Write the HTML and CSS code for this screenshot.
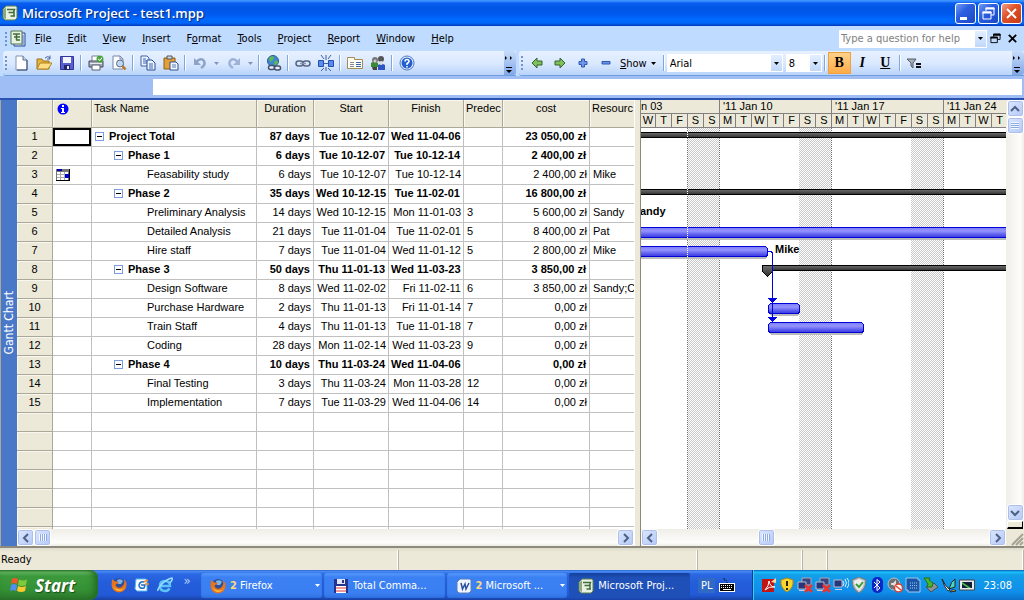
FILE: index.html
```html
<!DOCTYPE html>
<html lang="en">
<head>
    <meta charset="UTF-8">
    <meta name="viewport" content="width=device-width, initial-scale=1.0">
    <title>Microsoft Project - test1.mpp</title>
    <link rel="stylesheet" href="styles.css">
</head>
<body>
    <svg class="sprite" aria-hidden="true">
        <symbol id="project" viewBox="0 0 16 16">
            <path d="M4 1h10l1 1v11l-2 2H3l-2-2V4z" fill="#e9f1e2" stroke="#5d7f52"/>
            <path d="M1 5l3-3v12l-3-1z" fill="#8aa97c"/>
            <path d="M5 4.500h7.500l-1 3H6.500M7 7.500h5v3.500H8.500M9 11h4" fill="none" stroke="#3f6e3a" stroke-width="1.500"/>
        </symbol>
        <symbol id="firefox" viewBox="0 0 16 16">
            <circle cx="8" cy="7" r="6" fill="#2c4f9e"/>
            <path d="M6 3q4-2 6 1l-2 3H7z" fill="#7db4e6"/>
            <path d="M1 2q0 3-.5 5.500Q1 15 8 15.500 15 15 15.500 8 15.500 4 13 2q1 4-1 6.500-2 3-5 2Q4 9 5 7L8 6Q7 4 5 4.500 3 4 1 2z" fill="#e8731a"/>
            <path d="M2 9q2 5 7 5 4-1 5.500-5-2 4-6 3.500Q4 12 2 9z" fill="#f9c23c"/>
        </symbol>
        <symbol id="down" viewBox="0 0 5 3"><path d="M0 0h5L2.500 3z" fill="currentColor"/></symbol>
        <symbol id="left" viewBox="0 0 10 10"><path d="M7 1L3 5l4 4" fill="none" stroke="#4d6185" stroke-width="2"/></symbol>
        <symbol id="right" viewBox="0 0 10 10"><path d="M3 1l4 4-4 4" fill="none" stroke="#4d6185" stroke-width="2"/></symbol>
        <symbol id="more" viewBox="0 0 10 22"><path d="M1 4l2 2-2 2zM6 4l2 2-2 2zM2 15h6v1H2zM2 18h6l-3 3z" fill="#000"/></symbol>
        <symbol id="restore" viewBox="0 0 12 12"><path d="M4 4V1h7v6H8M1 4.500h7v6H1z" fill="none" stroke="currentColor" stroke-width="1"/><path d="M3.500 1h8v2h-8zM.5 4h8v2h-8z" fill="currentColor"/></symbol>
        <symbol id="net" viewBox="0 0 16 16">
            <path d="M5 1h9v7H5z" fill="#3b467f" stroke="#aab"/><path d="M1 5h8v7H1z" fill="#27357a" stroke="#bbc"/>
            <path d="M2 13h7v1H2z" fill="#ccd"/><path d="M8 8l7 7M15 8l-7 7" stroke="#f0312a" stroke-width="2.500"/>
        </symbol>
    </svg>

    <header class="titlebar">
        <svg class="icon"><use href="#project"/></svg>
        <h1>Microsoft Project - test1.mpp</h1>
        <button class="win" aria-label="Minimize"><svg viewBox="0 0 19 19"><path d="M4 13h7v3H4z" fill="#fff"/></svg></button>
        <button class="win" aria-label="Restore"><svg viewBox="0 0 19 19"><path d="M7 7V4h8v7h-3M4 8h8v7H4z" fill="none" stroke="#fff"/><path d="M6.500 3.500h9v2h-9zM3.500 7.500h9v2h-9z" fill="#fff"/></svg></button>
        <button class="win close" aria-label="Close"><svg viewBox="0 0 19 19"><path d="M5 5l9 9M14 5l-9 9" stroke="#fff" stroke-width="2"/></svg></button>
    </header>

    <nav class="menubar">
        <span class="grip"></span>
        <svg class="doc-icon" viewBox="0 0 18 18">
            <path d="M5 3h11v13H5z" fill="#dbe7fb" stroke="#2b4b8e"/>
            <path d="M2 1h11v13H2z" fill="#e9f1e2" stroke="#4f7548"/>
            <path d="M4 4h7M5 7h6M7 10h4M7.500 4v6" stroke="#3f6e3a" stroke-width="1.500"/><path d="M12 15h3M14 5v9" stroke="#5177b8"/>
        </svg>
        <button><u>F</u>ile</button>
        <button><u>E</u>dit</button>
        <button><u>V</u>iew</button>
        <button><u>I</u>nsert</button>
        <button>F<u>o</u>rmat</button>
        <button><u>T</u>ools</button>
        <button><u>P</u>roject</button>
        <button><u>R</u>eport</button>
        <button><u>W</u>indow</button>
        <button><u>H</u>elp</button>
        <div class="combo ask">
            <input type="text" placeholder="Type a question for help" aria-label="Type a question for help">
            <span class="drop"><svg class="caret"><use href="#down"/></svg></span>
        </div>
        <button class="mdi" aria-label="Restore window"><svg><use href="#restore"/></svg></button>
        <button class="mdi" aria-label="Close window"><svg viewBox="0 0 12 12"><path d="M2 2l8 8M10 2l-8 8" stroke="#000" stroke-width="2"/></svg></button>
    </nav>

    <div class="toolbars">
        <div class="toolbar">
            <span class="grip"></span>
            <button class="tool" aria-label="New"><svg viewBox="0 0 16 16"><path d="M3 1h7l4 4v10H3z" fill="#fff" stroke="#8294b5"/><path d="M10 1v4h4" fill="#c9d8f2" stroke="#5a6c94"/><path d="M14 5v10H4" fill="none" stroke="#34456e"/></svg></button>
            <button class="tool" aria-label="Open"><svg viewBox="0 0 16 16"><path d="M1 4h5l1 2h6v8H1z" fill="#e6b43e" stroke="#9a7018"/><path d="M1 14l3-6h12l-4 6z" fill="#ffdf83" stroke="#b0811f"/><path d="M9 3q3-3 5 0M14 .5V4h-3" fill="none" stroke="#40629c"/></svg></button>
            <button class="tool" aria-label="Save"><svg viewBox="0 0 16 16"><path d="M1.500 1.500h13v13h-13z" fill="#5a5fd0" stroke="#30349a"/><path d="M4 2h8v6H4z" fill="#f2f4ff"/><path d="M5 10h6v5H5z" fill="#23266b"/><path d="M8 11h2v3H8z" fill="#e8eaff"/></svg></button>
            <span class="sep"></span>
            <button class="tool" aria-label="Print"><svg viewBox="0 0 16 16"><path d="M4 1h7v6H4z" fill="#fff" stroke="#76809a"/><path d="M1 6h14v6H1z" fill="#a5abb8" stroke="#454b59"/><path d="M2 8h12v1H2z" fill="#e9ecf2"/><path d="M4 10h8v5H4z" fill="#fff" stroke="#596175"/><circle cx="12" cy="4" r="3.500" fill="#4aa43c"/><path d="M10 4l2 1.500 2-3" fill="none" stroke="#fff"/></svg></button>
            <button class="tool" aria-label="Print Preview"><svg viewBox="0 0 16 16"><path d="M2 1h7l3 3v10H2z" fill="#fff" stroke="#7586a8"/><path d="M9 1v3h3" fill="none" stroke="#7586a8"/><circle cx="9" cy="8.500" r="3.500" fill="#bcd9f4" stroke="#5a6b86"/><path d="M11.500 11l3 3.500" stroke="#bd7427" stroke-width="2.500"/></svg></button>
            <span class="sep"></span>
            <button class="tool" aria-label="Copy"><svg viewBox="0 0 16 16"><path d="M1 1h6l2 2v8H1z" fill="#eef4ff" stroke="#3d64a8"/><path d="M3 4h3M3 6h4M3 8h4" stroke="#3d64a8"/><path d="M7 5h5l3 3v7H7z" fill="#eef4ff" stroke="#274c96"/><path d="M9 9h4M9 11h4M9 13h4" stroke="#3d64a8"/></svg></button>
            <button class="tool" aria-label="Paste"><svg viewBox="0 0 16 16"><path d="M1 3h11v11H1z" fill="#e3a03a" stroke="#8f5d13"/><path d="M4 1h5v3H4z" fill="#d5d9e2" stroke="#555"/><path d="M7 7h6l2 2v6H7z" fill="#f2f6ff" stroke="#31508d"/><path d="M9 10h4M9 12h4" stroke="#5a77b0"/></svg></button>
            <span class="sep"></span>
            <button class="tool" aria-label="Undo"><svg viewBox="0 0 16 16"><path d="M4 7q5-5 8-1 2 4-3 7" fill="none" stroke="#8fa3c9" stroke-width="2.500"/><path d="M2 3v7h7z" fill="#8fa3c9"/></svg></button>
            <button class="tool-arrow dim" aria-label="Undo list"><svg class="caret"><use href="#down"/></svg></button>
            <button class="tool" aria-label="Redo"><svg viewBox="0 0 16 16"><path d="M12 7Q7 2 4 6q-2 4 3 7" fill="none" stroke="#9fb2d6" stroke-width="2.500"/><path d="M14 3v7H7z" fill="#9fb2d6"/></svg></button>
            <button class="tool-arrow dim" aria-label="Redo list"><svg class="caret"><use href="#down"/></svg></button>
            <span class="sep"></span>
            <button class="tool" aria-label="Insert Hyperlink"><svg viewBox="0 0 16 16"><circle cx="7" cy="6" r="5.500" fill="#3f87d1" stroke="#2a5c96"/><path d="M3 3q3-3 5-1l-1 3-3 2zM8 7l3-2 1 3-3 3z" fill="#5cbb4a"/><rect x="2.500" y="10.500" width="6" height="4" rx="2" fill="#e6efff" stroke="#44506b" stroke-width="1.500"/><rect x="8.500" y="11" width="6" height="4" rx="2" fill="#e6efff" stroke="#44506b" stroke-width="1.500"/></svg></button>
            <span class="sep"></span>
            <button class="tool" aria-label="Link Tasks"><svg viewBox="0 0 16 16"><rect x="1" y="6" width="7" height="5" rx="2.500" fill="none" stroke="#566583" stroke-width="1.500"/><rect x="8" y="6" width="7" height="5" rx="2.500" fill="none" stroke="#566583" stroke-width="1.500"/><path d="M5 8.500h6" stroke="#8996ae" stroke-width="1.500"/></svg></button>
            <button class="tool" aria-label="Unlink Tasks"><svg viewBox="0 0 16 16"><path d="M.5 5.500h5v6h-5zM10.500 5.500h5v6h-5z" fill="#5b8cec" stroke="#2350b0"/><path d="M8 0v5M8 12v4M3 0l3 4M13 0l-3 4M3 16l3-3M13 16l-3-3M6 8.500h4" stroke="#3a5f9d"/></svg></button>
            <span class="sep"></span>
            <button class="tool" aria-label="Task Information"><svg viewBox="0 0 16 16"><path d="M.5 4.500V2.500h7v2h8v9H.5z" fill="#fffdf2" stroke="#a38b52"/><path d="M3 7.500h4M3 9.500h4M3 11.500h4" stroke="#808a9c"/><path d="M9 7.500h5M9 9.500h5M9 11.500h5" stroke="#3e66ae"/></svg></button>
            <button class="tool" aria-label="Assign Resources"><svg viewBox="0 0 16 16"><path d="M1 8q3-3 7 0v4H1z" fill="#3c8b33"/><path d="M8 10q3-3 7 0v5H8z" fill="#2f55c4"/><circle cx="5" cy="5" r="3" fill="#777"/><circle cx="11" cy="4" r="3" fill="#555"/><circle cx="11" cy="8" r="2" fill="#ddd"/><circle cx="5" cy="6" r="1.500" fill="#ccc"/><path d="M2 12h5v3H3z" fill="#444"/></svg></button>
            <span class="sep"></span>
            <button class="tool" aria-label="Help"><svg viewBox="0 0 16 16"><circle cx="8" cy="8" r="7" fill="#eaf2ff" stroke="#4a78c4"/><circle cx="8" cy="8" r="5.500" fill="#2260cf"/><path d="M6 6.500Q6 4.500 8 4.500t2 2Q10 7.500 8 8.500V10M8 11v1.500" fill="none" stroke="#fff" stroke-width="1.500"/></svg></button>
            <button class="overflow" aria-label="Toolbar options"><svg><use href="#more"/></svg></button>
        </div>
        <div class="toolbar">
            <span class="grip"></span>
            <button class="tool" aria-label="Outdent"><svg viewBox="0 0 16 16"><path d="M3 8l5-5v3h5v4H8v3z" fill="#7fc05a" stroke="#35622a"/></svg></button>
            <button class="tool" aria-label="Indent"><svg viewBox="0 0 16 16"><path d="M13 8L8 3v3H3v4h5v3z" fill="#7fc05a" stroke="#35622a"/></svg></button>
            <button class="tool" aria-label="Show Subtasks"><svg viewBox="0 0 16 16"><path d="M6.500 4h3v2.500H12v3H9.500V12h-3V9.500H4v-3h2.500z" fill="#6e96e6" stroke="#2f56b5"/></svg></button>
            <button class="tool" aria-label="Hide Subtasks"><svg viewBox="0 0 16 16"><path d="M4 6.500h8v2.500H4z" fill="#6e96e6" stroke="#2f56b5"/></svg></button>
            <button class="show"><span><u>S</u>how</span><svg class="caret"><use href="#down"/></svg></button>
            <span class="sep"></span>
            <div class="combo font">
                <select aria-label="Font"><option>Arial</option></select>
                <span class="drop"><svg class="caret"><use href="#down"/></svg></span>
            </div>
            <div class="combo size">
                <select aria-label="Font size"><option>8</option></select>
                <span class="drop"><svg class="caret"><use href="#down"/></svg></span>
            </div>
            <span class="sep"></span>
            <button class="tool letter pressed"><b>B</b></button>
            <button class="tool letter"><i>I</i></button>
            <button class="tool letter"><u>U</u></button>
            <span class="sep"></span>
            <button class="tool" aria-label="AutoFilter"><svg viewBox="0 0 16 16"><path d="M1 4h9L7 8v5l-2-2V8z" fill="#a9aeb8" stroke="#555b66"/><path d="M10 8h5v2h-5zM10 11h5v2h-5z" fill="#111"/></svg></button>
            <button class="overflow" aria-label="Toolbar options"><svg><use href="#more"/></svg></button>
        </div>
    </div>

    <div class="entry"><input type="text" aria-label="Entry bar"></div>

    <main class="workspace">
        <div class="view-name"><span>Gantt Chart</span></div>

        <section class="pane">
            <div class="sheet">
                <table>
                    <colgroup>
                        <col class="c-num"><col class="c-ind"><col class="c-name"><col class="c-dur"><col class="c-date"><col class="c-date"><col class="c-pred"><col class="c-cost"><col class="c-res">
                    </colgroup>
                    <thead>
                        <tr>
                            <th></th>
                            <th class="left"><svg class="info" viewBox="0 0 12 12"><circle cx="6" cy="6" r="5.500" fill="#00f"/><path d="M5 2h2v2H5zM4 5h3v4h1v1H4V9h1V6H4z" fill="#fff"/></svg></th>
                            <th class="left">Task Name</th><th>Duration</th><th>Start</th><th>Finish</th><th class="left">Predec</th><th>cost</th><th class="left">Resourc</th>
                        </tr>
                    </thead>
                    <tbody>
                        <tr class="summary"><th>1</th><td class="selected"></td><td class="name"><button class="toggle" aria-label="Collapse"></button>Project Total</td><td>87 days</td><td>Tue 10-12-07</td><td>Wed 11-04-06</td><td></td><td>23 050,00 zł</td><td></td></tr>
                        <tr class="summary"><th>2</th><td></td><td class="name phase"><button class="toggle" aria-label="Collapse"></button>Phase 1</td><td>6 days</td><td>Tue 10-12-07</td><td>Tue 10-12-14</td><td></td><td>2 400,00 zł</td><td></td></tr>
                        <tr><th>3</th><td class="ind"><svg class="calendar" viewBox="0 0 14 12"><path d="M0 0h14v12H0z" fill="#777"/><path d="M1 3h11v8H1z" fill="#fff"/><path d="M1 0h5v2H1z" fill="#00a"/><path d="M1 5.500h11M1 8.500h11M4.500 3v8M8.500 3v8" stroke="#aaa"/><path d="M9 5h4v4H9z" fill="#00d"/><path d="M13 0v11H0v1h14V0z" fill="#000"/></svg></td><td class="name task">Feasability study</td><td>6 days</td><td>Tue 10-12-07</td><td>Tue 10-12-14</td><td></td><td>2 400,00 zł</td><td>Mike</td></tr>
                        <tr class="summary"><th>4</th><td></td><td class="name phase"><button class="toggle" aria-label="Collapse"></button>Phase 2</td><td>35 days</td><td>Wed 10-12-15</td><td>Tue 11-02-01</td><td></td><td>16 800,00 zł</td><td></td></tr>
                        <tr><th>5</th><td></td><td class="name task">Preliminary Analysis</td><td>14 days</td><td>Wed 10-12-15</td><td>Mon 11-01-03</td><td>3</td><td>5 600,00 zł</td><td>Sandy</td></tr>
                        <tr><th>6</th><td></td><td class="name task">Detailed Analysis</td><td>21 days</td><td>Tue 11-01-04</td><td>Tue 11-02-01</td><td>5</td><td>8 400,00 zł</td><td>Pat</td></tr>
                        <tr><th>7</th><td></td><td class="name task">Hire staff</td><td>7 days</td><td>Tue 11-01-04</td><td>Wed 11-01-12</td><td>5</td><td>2 800,00 zł</td><td>Mike</td></tr>
                        <tr class="summary"><th>8</th><td></td><td class="name phase"><button class="toggle" aria-label="Collapse"></button>Phase 3</td><td>50 days</td><td>Thu 11-01-13</td><td>Wed 11-03-23</td><td></td><td>3 850,00 zł</td><td></td></tr>
                        <tr><th>9</th><td></td><td class="name task">Design Software</td><td>8 days</td><td>Wed 11-02-02</td><td>Fri 11-02-11</td><td>6</td><td>3 850,00 zł</td><td>Sandy;C</td></tr>
                        <tr><th>10</th><td></td><td class="name task">Purchase Hardware</td><td>2 days</td><td>Thu 11-01-13</td><td>Fri 11-01-14</td><td>7</td><td>0,00 zł</td><td></td></tr>
                        <tr><th>11</th><td></td><td class="name task">Train Staff</td><td>4 days</td><td>Thu 11-01-13</td><td>Tue 11-01-18</td><td>7</td><td>0,00 zł</td><td></td></tr>
                        <tr><th>12</th><td></td><td class="name task">Coding</td><td>28 days</td><td>Mon 11-02-14</td><td>Wed 11-03-23</td><td>9</td><td>0,00 zł</td><td></td></tr>
                        <tr class="summary"><th>13</th><td></td><td class="name phase"><button class="toggle" aria-label="Collapse"></button>Phase 4</td><td>10 days</td><td>Thu 11-03-24</td><td>Wed 11-04-06</td><td></td><td>0,00 zł</td><td></td></tr>
                        <tr><th>14</th><td></td><td class="name task">Final Testing</td><td>3 days</td><td>Thu 11-03-24</td><td>Mon 11-03-28</td><td>12</td><td>0,00 zł</td><td></td></tr>
                        <tr><th>15</th><td></td><td class="name task">Implementation</td><td>7 days</td><td>Tue 11-03-29</td><td>Wed 11-04-06</td><td>14</td><td>0,00 zł</td><td></td></tr>
                        <tr><th></th><td></td><td></td><td></td><td></td><td></td><td></td><td></td><td></td></tr>
                        <tr><th></th><td></td><td></td><td></td><td></td><td></td><td></td><td></td><td></td></tr>
                        <tr><th></th><td></td><td></td><td></td><td></td><td></td><td></td><td></td><td></td></tr>
                        <tr><th></th><td></td><td></td><td></td><td></td><td></td><td></td><td></td><td></td></tr>
                        <tr><th></th><td></td><td></td><td></td><td></td><td></td><td></td><td></td><td></td></tr>
                        <tr><th></th><td></td><td></td><td></td><td></td><td></td><td></td><td></td><td></td></tr>
                        <tr><th></th><td></td><td></td><td></td><td></td><td></td><td></td><td></td><td></td></tr>
                    </tbody>
                </table>
            </div>
            <div class="hscroll">
                <button class="sb" aria-label="Scroll left"><svg><use href="#left"/></svg></button>
                <span class="thumb"></span>
                <span class="track"></span>
                <button class="sb" aria-label="Scroll right"><svg><use href="#right"/></svg></button>
            </div>
        </section>

        <div class="splitter"></div>

        <section class="pane">
            <div class="timescale">
                <div class="week partial"><span>n 03</span><ol><li>W</li><li>T</li><li>F</li><li>S</li><li>S</li></ol></div>
                <div class="week"><span>'11 Jan 10</span><ol><li>M</li><li>T</li><li>W</li><li>T</li><li>F</li><li>S</li><li>S</li></ol></div>
                <div class="week"><span>'11 Jan 17</span><ol><li>M</li><li>T</li><li>W</li><li>T</li><li>F</li><li>S</li><li>S</li></ol></div>
                <div class="week"><span>'11 Jan 24</span><ol><li>M</li><li>T</li><li>W</li><li>T</li></ol></div>
            </div>
            <svg class="chart" shape-rendering="crispEdges">
                <defs>
                    <pattern id="weekend" width="2" height="2" patternUnits="userSpaceOnUse"><path d="M0 0h1v1H0zM1 1h1v1H1z" fill="#c8c8c8"/></pattern>
                    <linearGradient id="blue" x1="0" y1="0" x2="0" y2="1"><stop offset="0" stop-color="#7c7cf8"/><stop offset=".35" stop-color="#9494ff"/><stop offset=".8" stop-color="#5050ea"/><stop offset="1" stop-color="#3a3ae0"/></linearGradient>
                    <linearGradient id="black" x1="0" y1="0" x2="0" y2="1"><stop offset="0" stop-color="#707070"/><stop offset="1" stop-color="#303030"/></linearGradient>
                </defs>
                <!-- weekends -->
                <rect x="46" width="32" height="100%" fill="url(#weekend)"/>
                <rect x="158" width="32" height="100%" fill="url(#weekend)"/>
                <rect x="270" width="32" height="100%" fill="url(#weekend)"/>
                <g class="weekline"><line x1="78.500" x2="78.500" y2="100%"/><line x1="190.500" x2="190.500" y2="100%"/><line x1="302.500" x2="302.500" y2="100%"/><line x1="46.500" x2="46.500" y2="100%"/></g>
                <!-- summary bars -->
                <g fill="url(#black)" stroke="#000">
                    <rect x="-5" y="4.500" width="1400" height="5"/>
                    <rect x="-5" y="61.500" width="1400" height="5"/>
                    <rect x="126.500" y="137.500" width="1400" height="5"/>
                    <path d="M121.500 137.500h10v6l-5 5-5-5z"/>
                </g>
                <!-- task bars -->
                <g fill="#bbb"><rect x="-9" y="102" width="1400" height="10"/><rect x="-9" y="121" width="135" height="10" rx="3"/><rect x="129" y="178" width="29" height="10" rx="3"/><rect x="129" y="197" width="93" height="10" rx="3"/></g>
                <g fill="url(#blue)" stroke="#0000d8">
                    <rect x="-9" y="99.500" width="1400" height="10"/>
                    <rect x="-9.500" y="118.500" width="136" height="10" rx="3"/>
                    <rect x="127.500" y="175.500" width="31" height="10" rx="3"/>
                    <rect x="127.500" y="194.500" width="95" height="10" rx="3"/>
                </g>
                <path d="M46.500 4v6M46.500 61v6M46.500 99v11M46.500 118v11" stroke="#fff" stroke-dasharray="1 1"/>
                <!-- links -->
                <path d="M127 123.500h3l1.500 1.500v70" fill="none" stroke="#0000e0"/>
                <path d="M127 170h9l-4.500 5zM127 189h9l-4.500 5z" fill="#0000e0"/>
                <text x="-1" y="87">andy</text>
                <text x="134" y="125">Mike</text>
            </svg>
            <div class="hscroll">
                <button class="sb" aria-label="Scroll left"><svg><use href="#left"/></svg></button>
                <span class="track"></span>
                <span class="thumb"></span>
                <span class="track long"></span>
                <button class="sb" aria-label="Scroll right"><svg><use href="#right"/></svg></button>
            </div>
        </section>

        <div class="vscroll">
            <button class="sb" aria-label="Scroll up"><svg viewBox="0 0 10 10"><path d="M1 7l4-4 4 4" fill="none" stroke="#4d6185" stroke-width="2"/></svg></button>
            <span class="thumb"></span>
            <span class="track"></span>
            <button class="sb" aria-label="Scroll down"><svg viewBox="0 0 10 10"><path d="M1 3l4 4 4-4" fill="none" stroke="#4d6185" stroke-width="2"/></svg></button>
            <span class="split-box"></span>
            <svg class="resize" viewBox="0 0 18 17"><path d="M6 16L17 5M10 16l7-7M14 16l3-3" stroke="#a5a294" stroke-width="2"/></svg>
        </div>
    </main>

    <footer class="status"><span>Ready</span><span></span><span></span><span></span><span></span></footer>

    <div class="taskbar">
        <button class="start">
            <svg viewBox="0 0 18 18"><path d="M2 3q3-2 6 0L7 8Q4 6 1 8z" fill="#f0582a"/><path d="M9 3.500q4 2 8 0L16 9q-4 2-8 0z" fill="#7fc93c"/><path d="M1 9q3-2 6 0l-1 6q-3-2-6 0z" fill="#4f8ff5"/><path d="M8 10q4 2 8 0l-1 5q-4 2-8 0z" fill="#fbc92f"/></svg>
            Start
        </button>
        <div class="quick">
            <button aria-label="Firefox"><svg class="icon"><use href="#firefox"/></svg></button>
            <button aria-label="Mail"><svg class="icon" viewBox="0 0 16 16"><path d="M2 2h10l1 2v10H3L1 12z" fill="#fff" stroke="#58b4ee"/><path d="M10 5Q6 4 5 8q0 4 5 3l1-3H7" fill="none" stroke="#1b6ec9" stroke-width="1.500"/><path d="M10 5l4-2M11 7h4" stroke="#f28b25" stroke-width="1.500"/></svg></button>
            <button aria-label="Internet Explorer"><svg class="icon" viewBox="0 0 16 16"><path d="M3 9h10q0-5-5-5t-5 5 5 5q3 0 4.500-2.500" fill="none" stroke="#5cc4f7" stroke-width="2.500"/><path d="M1 14Q0 12 5 7t10-6q1 2-2 5" fill="none" stroke="#9be0ff" stroke-width="1.500"/></svg></button>
            <span>»</span>
        </div>
        <div class="tasks">
            <button class="task-button"><svg class="icon"><use href="#firefox"/></svg><span class="label"><b>2</b> Firefox</span><svg class="caret"><use href="#down"/></svg></button>
            <button class="task-button"><svg class="icon" viewBox="0 0 16 16"><path d="M1 1h14v14H1z" fill="#22348f"/><path d="M4 1h8v5H4z" fill="#dfe5f4"/><path d="M9 2h2v3H9z" fill="#22348f"/><path d="M3 8h10v7H3z" fill="#fff"/><path d="M3 10h10M3 13h10" stroke="#e03030"/></svg><span class="label">Total Comma...</span></button>
            <button class="task-button"><svg class="icon" viewBox="0 0 16 16"><path d="M4 1h10l1 1v11l-2 2H3l-2-2V4z" fill="#eef4ff" stroke="#5b7fb8"/><path d="M5 5l1.500 6L9 6l1 5 3-6" fill="none" stroke="#2a4f9f" stroke-width="1.500"/></svg><span class="label"><b>2</b> Microsoft ...</span><svg class="caret"><use href="#down"/></svg></button>
            <button class="task-button active"><svg class="icon"><use href="#project"/></svg><span class="label">Microsoft Proj...</span></button>
        </div>
        <div class="lang"><span>PL</span><svg class="icon" viewBox="0 0 16 16"><path d="M0 6h16v9H0z" fill="#fff"/><path d="M1 7h14v7H1z" fill="#000"/><path d="M2 8.500h12M2 10.500h12" stroke="#fff" stroke-dasharray="1 1"/><path d="M4 12.500h8" stroke="#fff"/><path d="M8 6V4q-1-1-3-1V1" fill="none" stroke="#000" stroke-dasharray="1 1"/></svg></div>
        <div class="tray">
            <svg class="icon" viewBox="0 0 16 16"><path d="M1 2h12v13H1z" fill="#c4140f"/><path d="M4 13q4-4 4-9 1 6 6 6-6-1-10 3z" fill="none" stroke="#fff"/><path d="M10 5l5-4v5z" fill="#f6d9a3"/></svg>
            <svg class="icon" viewBox="0 0 16 16"><path d="M8 1l6 2q1 8-6 12Q1 11 2 3z" fill="#fbd32e" stroke="#a6891c"/><path d="M7 4h2v5H7zM7 11h2v2H7z" fill="#222"/></svg>
            <svg class="icon"><use href="#net"/></svg>
            <svg class="icon"><use href="#net"/></svg>
            <svg class="icon" viewBox="0 0 16 16"><path d="M1 3h8v7H1z" fill="#27357a" stroke="#bbc"/><path d="M2 12h7v1H2z" fill="#ccd"/><path d="M10 4q2 2 0 5M12 2q3 4 0 8M14 1q4 5 0 10" fill="none" stroke="#e2ecff"/></svg>
            <svg class="icon" viewBox="0 0 16 16"><path d="M8 0l7 3q0 9-7 13Q1 12 1 3z" fill="#b6bcc0" stroke="#70787c"/><path d="M8 2l5 2q0 6-5 10-5-4-5-10z" fill="#eee"/><path d="M5 7l3 3 4-5" fill="none" stroke="#3c9c36" stroke-width="2"/></svg>
            <svg class="icon" viewBox="0 0 16 16"><rect x="3" y="0" width="11" height="16" rx="5" fill="#0a28c8"/><path d="M5 5l6 6-3 2.500v-11L11 5l-6 6" fill="none" stroke="#fff"/></svg>
            <svg class="icon" viewBox="0 0 16 16"><circle cx="7" cy="7" r="6" fill="#6d7278" stroke="#b9bec4"/><path d="M4 6h2l3-3v8L6 8H4z" fill="#ddd"/><circle cx="11.500" cy="11" r="4" fill="#fff" stroke="#e03e2a" stroke-width="1.500"/><path d="M9 9l5 4" stroke="#e03e2a" stroke-width="1.500"/></svg>
            <svg class="icon" viewBox="0 0 16 16"><path d="M1 1h12v2h2v12H3v-2H1z" fill="#1a57a8" stroke="#9cc8ef"/><path d="M5 6h7M5 8.500h7M5 11h7" stroke="#9cc8ef" stroke-dasharray="1 1"/></svg>
            <svg class="icon" viewBox="0 0 16 16"><path d="M3 10l8-4 4 4-7 5z" fill="#8c9298" stroke="#4a4f54"/><path d="M1 1h6l-1 2 4 3-1 4H4l1-3z" fill="#46b633" stroke="#237018"/></svg>
            <svg class="icon" viewBox="0 0 16 16"><path d="M1 2q2 8 6 12l2-1Q4 9 1 2z" fill="#fff" stroke="#222"/><path d="M8 12q2-8 6-10v8z" fill="#45d4c5" stroke="#222"/><path d="M9 15q3-4 6-1z" fill="#f2df54" stroke="#222"/></svg>
            <svg class="icon" viewBox="0 0 16 16"><path d="M.5 3h15v10H.5z" fill="#e6ebf0" stroke="#444"/><path d="M3 5h10v6H3z" fill="#101c38"/><path d="M3 5l9 6H9L3 7z" fill="#49c04a"/></svg>
            <time>23:08</time>
        </div>
    </div>
</body>
</html>
```

FILE: styles.css
```css
* {
    box-sizing: border-box;
}
body {
    margin: 0;
    height: 100vh;
    display: flex;
    flex-direction: column;
    overflow: hidden;
    font-family: "DejaVu Sans Condensed", "Noto Sans", sans-serif;
    font-size: 11px;
    color: #000;
    background-color: #ece9d8;
}
button, input, select {
    font: inherit;
    color: inherit;
    margin: 0;
    padding: 0;
    border: none;
    border-radius: 0;
    background: none;
}
svg {
    display: block;
    flex: none;
}
.sprite {
    display: none;
}
.icon {
    width: 16px;
    height: 16px;
}
.caret {
    width: 5px;
    height: 3px;
}

/* title bar */
.titlebar {
    flex: none;
    display: flex;
    align-items: center;
    gap: 2px;
    height: 26px;
    padding: 0 2px;
    background: linear-gradient(#3b92ff 0, #3b92ff 1px, #0a5ff0 3px, #0055e5 8px, #0058ee 14px, #0069ff 19px, #0066fc 23px, #0038b8 26px);
}
.titlebar h1 {
    flex: 1;
    margin: 0 0 0 2px;
    font-family: "Open Sans", "Noto Sans", sans-serif;
    font-size: 13px;
    font-weight: 600;
    color: #fff;
    text-shadow: 1px 1px 1px #062a7d;
}
.win {
    width: 21px;
    height: 21px;
    border: 1px solid #fff;
    border-radius: 3px;
    background: linear-gradient(135deg, #6f9bf5, #2c5fe0 40%, #1a49c4);
}
.win.close {
    background: linear-gradient(135deg, #f0a088, #e0542c 40%, #c43a12);
}

/* menu bar */
.menubar {
    flex: none;
    display: flex;
    align-items: center;
    height: 25px;
    padding: 0 3px;
    background-color: #bfdbff;
}
.menubar button {
    padding: 0 8px;
}
.grip {
    flex: none;
    width: 2px;
    height: 14px;
    margin: 0 2px;
    background: repeating-linear-gradient(#6f95cf 0, #6f95cf 2px, transparent 2px, transparent 4px);
}
.doc-icon {
    width: 18px;
    height: 18px;
}
.combo {
    display: flex;
    align-items: center;
    position: relative;
    height: 18px;
    background-color: #fff;
}
.combo select {
    flex: 1;
    min-width: 0;
    height: 18px;
    padding-left: 3px;
    appearance: none;
}
.combo input {
    flex: 1;
    min-width: 0;
    padding-left: 2px;
}
.combo input::placeholder {
    color: #808080;
}
.drop {
    position: absolute;
    right: 1px;
    top: 1px;
    bottom: 1px;
    width: 11px;
    display: flex;
    align-items: center;
    justify-content: center;
    background: linear-gradient(#e3efff, #c0d8fa);
    pointer-events: none;
}
.ask {
    width: 148px;
    margin-left: auto;
}
.menubar .mdi {
    width: 17px;
    padding: 0 3px;
}
.mdi svg {
    width: 11px;
    height: 11px;
}

/* toolbars */
.toolbars {
    flex: none;
    display: grid;
    grid-template-columns: 513fr 505fr;
    gap: 3px;
    height: 25px;
    padding-left: 3px;
    background-color: #bfdbff;
}
.toolbar {
    display: flex;
    align-items: center;
    min-width: 0;
    border-bottom: 1px solid #6f9ddd;
    border-radius: 3px 0 0 3px;
    background: linear-gradient(#e6f0ff, #dbe9ff 50%, #b9d4fa);
}
.tool {
    flex: none;
    width: 23px;
    height: 22px;
    display: flex;
    align-items: center;
    justify-content: center;
}
.tool svg {
    width: 16px;
    height: 16px;
}
.tool-arrow {
    flex: none;
    width: 11px;
    display: flex;
    justify-content: center;
}
.dim {
    color: #8095bb;
}
.sep {
    flex: none;
    width: 2px;
    height: 16px;
    margin: 0 2px;
    border-left: 1px solid #7fa8de;
    border-right: 1px solid #fff;
}
.overflow {
    flex: none;
    align-self: stretch;
    width: 12px;
    margin-left: auto;
    background: linear-gradient(#c8dcfa, #80a8e8);
    border-radius: 0 3px 3px 0;
}
.overflow svg {
    width: 10px;
    height: 22px;
}
.show {
    flex: none;
    display: flex;
    align-items: center;
    gap: 4px;
    padding: 0 5px 0 3px;
}
.font {
    width: 116px;
}
.size {
    width: 36px;
    margin-left: 3px;
}
.letter {
    font-family: "Liberation Serif", serif;
    font-size: 14px;
    font-weight: bold;
}
.pressed {
    background: linear-gradient(#ffd28a, #ffab48);
    border: 1px solid #f0a040;
}

/* entry bar */
.entry {
    flex: none;
    height: 22px;
    padding: 3px 2px 3px 153px;
    background-color: #9ebef5;
}
.entry input {
    display: block;
    width: 100%;
    height: 16px;
    background-color: #fff;
}

/* workspace */
.workspace {
    flex: 1;
    min-height: 0;
    display: grid;
    grid-template-columns: 17px minmax(0, 617fr) 7px minmax(0, 365fr) 18px;
    border-top: 2px solid #2a52b0;
    border-bottom: 2px solid #8e8b7e;
}
.view-name {
    display: flex;
    align-items: center;
    justify-content: center;
    border-left: 1px solid #aca899;
    background-color: #4a78c8;
    color: #fff;
    font-size: 12px;
}
.view-name span {
    writing-mode: vertical-rl;
    transform: rotate(180deg);
}
.pane {
    display: flex;
    flex-direction: column;
    min-height: 0;
    background-color: #fff;
}
.splitter {
    background-color: #ece9d8;
    border-left: 1px solid #fff;
    border-right: 1px solid #8c8a7c;
}
.sheet {
    flex: 1;
    min-height: 0;
    overflow: hidden;
}
table {
    width: 617px;
    table-layout: fixed;
    border-collapse: separate;
    border-spacing: 0;
    font-family: "Liberation Sans", Arial, sans-serif;
}
.c-num { width: 36px; }
.c-ind { width: 39px; }
.c-name { width: 165px; }
.c-dur { width: 57px; }
.c-date { width: 75px; }
.c-pred { width: 39px; }
.c-cost { width: 87px; }
.c-res { width: 44px; }
th, td {
    height: 19px;
    padding: 0 2px 2px;
    line-height: 16px;
    vertical-align: top;
    text-align: right;
    white-space: nowrap;
    overflow: hidden;
    border-right: 1px solid #c0c0c0;
    border-bottom: 1px solid #c0c0c0;
}
th {
    font-weight: normal;
    text-align: center;
    background-color: #ece9d8;
    border-color: #aca899;
    box-shadow: inset 1px 1px #f8f7f0;
}
thead th {
    height: 28px;
}
.left,
td:nth-child(7),
td:nth-child(9) {
    text-align: left;
}
td:nth-child(7),
td:nth-child(9) {
    padding-left: 3px;
}
tr > :last-child {
    border-right: none;
}
.summary td {
    font-weight: bold;
    padding-right: 3px;
}
.summary td.name,
.name {
    text-align: left;
    padding-left: 3px;
}
.summary td.phase {
    padding-left: 22px;
}
td.task {
    padding-left: 55px;
}
.selected {
    box-shadow: inset 0 0 0 2px #000;
}
td.ind {
    padding: 3px 0 0 3px;
}
.info {
    width: 12px;
    height: 12px;
    margin: 3px 0 0 2px;
}
.calendar {
    width: 14px;
    height: 12px;
}
.toggle {
    width: 9px;
    height: 9px;
    margin-right: 5px;
    vertical-align: 0;
    border: 1px solid #7b9ce0;
    background: linear-gradient(#000, #000) center / 5px 1px no-repeat #fff;
}

/* scroll bars */
.hscroll {
    flex: none;
    display: flex;
    height: 17px;
    background: linear-gradient(#f0eee8, #fdfdfb 80%, #eeede5);
}
.sb, .thumb {
    flex: none;
    display: flex;
    align-items: center;
    justify-content: center;
    width: 17px;
    height: 17px;
    border: 1px solid #fff;
    border-radius: 3px;
    background: linear-gradient(135deg, #dce7ff, #b4c9f8);
    box-shadow: inset 0 0 0 1px #aebfe8;
}
.sb svg {
    width: 10px;
    height: 10px;
}
.thumb::before {
    content: "";
    width: 8px;
    height: 7px;
    background: repeating-linear-gradient(90deg, #f4f8ff 0, #f4f8ff 1px, #8ca8e6 1px, #8ca8e6 2px);
}
.track {
    flex: 100;
}
.track.long {
    flex: 215;
}
.vscroll {
    display: flex;
    flex-direction: column;
    align-items: center;
    min-height: 0;
    background: linear-gradient(90deg, #f0eee8, #fdfdfb 80%, #eeede5);
}
.vscroll .thumb::before {
    background: repeating-linear-gradient(#f4f8ff 0, #f4f8ff 1px, #8ca8e6 1px, #8ca8e6 2px);
}
.split-box {
    width: 16px;
    height: 8px;
    background-color: #ece9d8;
    border: 1px solid #fff;
    border-right-color: #000;
    border-bottom: 2px solid #000;
}
.resize {
    width: 18px;
    height: 17px;
    background-color: #ece9d8;
}

/* gantt chart */
.timescale {
    flex: none;
    display: flex;
    height: 28px;
    overflow: hidden;
    background-color: #ece9d8;
    font-family: "Liberation Sans", Arial, sans-serif;
}
.week {
    flex: none;
    width: 112px;
    border-right: 1px solid #808080;
}
.week span {
    display: block;
    height: 14px;
    padding-left: 3px;
    line-height: 13px;
    border-bottom: 1px solid #808080;
}
.week ol {
    display: grid;
    grid-template-columns: repeat(7, 16px);
    margin: 0;
    padding: 0;
    list-style: none;
}
.week li {
    height: 14px;
    line-height: 13px;
    text-align: center;
    border-right: 1px solid #808080;
    border-bottom: 1px solid #808080;
}
.week li:nth-child(7) {
    border-right: none;
}
/* the view starts on Wednesday of the first week */
.week.partial {
    width: 79px;
}
.week.partial span {
    padding-left: 0;
}
.week.partial ol {
    grid-template-columns: 15px repeat(4, 16px);
}
.week.partial li:last-child {
    border-right: none;
}
.chart {
    flex: 1;
    width: 100%;
    min-height: 0;
    overflow: hidden;
}
.chart text {
    font-family: "Liberation Sans", Arial, sans-serif;
    font-size: 11px;
    font-weight: bold;
}
.weekline {
    stroke: #707070;
    stroke-dasharray: 1 1;
}

/* status bar */
.status {
    flex: none;
    display: grid;
    grid-template-columns: 399fr 299fr 105fr 25fr 196fr;
    height: 22px;
    padding: 2px 0;
    line-height: 20px;
    background: linear-gradient(#dedccb, #ece9d8 4px);
}
.status span {
    padding-left: 1px;
    border-right: 1px solid #b8b5a4;
    box-shadow: inset -1px 0 #fff;
}

/* taskbar */
.taskbar {
    flex: none;
    display: flex;
    height: 30px;
    color: #fff;
    background: linear-gradient(#1f4fc0 0, #4b90f5 1px, #2c68e4 4px, #245edb 12px, #2259d6 25px, #1941a5 30px);
}
.start {
    display: flex;
    align-items: center;
    gap: 7px;
    width: 98px;
    padding-left: 10px;
    font-family: "Open Sans", "Noto Sans", sans-serif;
    font-size: 17px;
    font-weight: bold;
    font-style: italic;
    text-shadow: 1px 1px 1px #1b4d1a;
    border-radius: 0 8px 8px 0;
    background: linear-gradient(#2f7a2f 0, #6cc069 2px, #3c9a3c 6px, #349034 20px, #2c762c 30px);
    box-shadow: inset -4px 0 6px #256b25;
}
.start svg {
    width: 18px;
    height: 18px;
}
.quick {
    display: flex;
    align-items: center;
    gap: 7px;
    padding: 0 6px 0 13px;
}
.quick span {
    width: 14px;
    padding-bottom: 10px;
    text-align: center;
    font-size: 13px;
    color: #b5d0ff;
}
.tasks {
    flex: 1;
    min-width: 0;
    display: grid;
    grid-template-columns: repeat(4, minmax(0, 1fr));
    gap: 2px;
    padding: 3px 1px 2px;
}
.task-button {
    min-width: 0;
    display: flex;
    align-items: center;
    gap: 4px;
    padding: 0 2px 0 9px;
    text-align: left;
    white-space: nowrap;
    border-radius: 2px;
    background: linear-gradient(#5a9bfb, #3c81f3 4px, #3a7ff2 20px, #3070e0);
    box-shadow: inset 0 0 1px #1d4fb5;
}
.task-button.active {
    background-color: #1b4bb0;
    background-image: linear-gradient(#15409a, #1e50b8 5px);
}
.label {
    flex: 1;
    min-width: 0;
    overflow: hidden;
}
.label b {
    color: #ffd97c;
}
.lang {
    display: flex;
    align-items: center;
    gap: 4px;
    width: 61px;
    padding-left: 7px;
}
.lang span {
    padding: 1px 3px;
    background-color: #316ac5;
}
.tray {
    display: flex;
    align-items: center;
    gap: 2px;
    width: 272px;
    padding: 0 12px 0 8px;
    border-left: 1px solid #0a3a90;
    background: linear-gradient(#0c59b9 0, #18c0f8 2px, #139ee9 5px, #0f8eea 22px, #0b6fc8 30px);
    box-shadow: inset 1px 0 #2fd0fb;
}
.tray time {
    margin-left: auto;
}
```
